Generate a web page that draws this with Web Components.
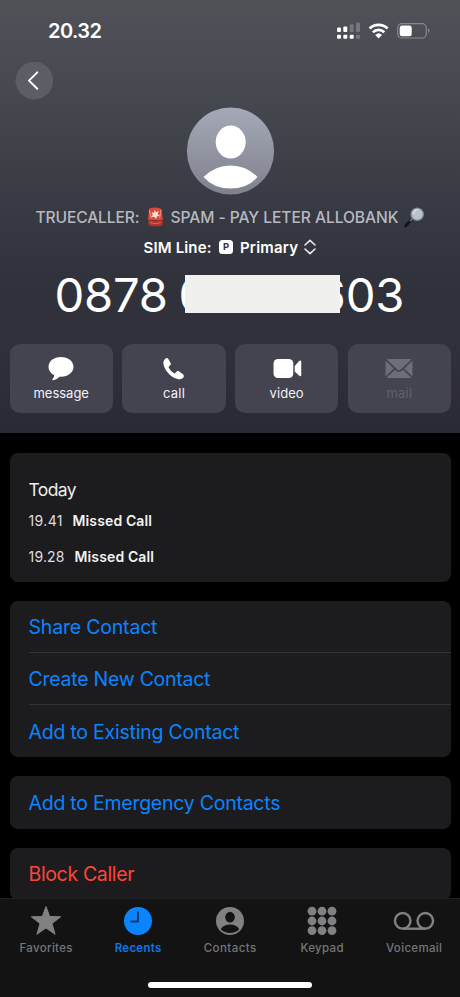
<!DOCTYPE html>
<html lang="en">
<head>
<meta charset="utf-8">
<title>Contact</title>
<style>
html,body{margin:0;background:#000;height:997px;overflow:hidden;font-family:Inter,"Liberation Sans",sans-serif;color:#fff}
</style>
</head>
<body>
<phone-screen></phone-screen>
<script>
const define=(name,html,setup)=>customElements.define(name,class extends HTMLElement{
  connectedCallback(){
    if(this.shadowRoot)return;
    const t=document.createElement('template');
    t.innerHTML=typeof html==='function'?html(this):html;
    this.attachShadow({mode:'open'}).append(t.content.cloneNode(true));
    if(setup)setup(this);
  }
});

/* Text set to a given width by adjusting its tracking. */
define('fit-text',e=>`<style>
:host{display:block;flex:none;white-space:pre;width:${e.getAttribute('w')}px;font-size:${e.getAttribute('size')}px;font-weight:${e.getAttribute('weight')||400};line-height:1.2}
span{display:inline-block}
</style><span></span>`,e=>{
  const s=e.shadowRoot.querySelector('span');
  s.textContent=e.getAttribute('text');
  const n=s.textContent.length-1;
  if(n>0)s.style.letterSpacing=((+e.getAttribute('w')-s.getBoundingClientRect().width)/n)+'px';
});

define('status-bar',`<style>
:host{display:flex;height:61.5px;box-sizing:border-box;padding:19px 30px 0 48px;justify-content:space-between;align-items:flex-start}
svg{display:block;margin-top:2px}
</style>
<fit-text text="20.32" size="20" weight="600" w="54"></fit-text>
<svg width="94" height="20" viewBox="336 21 94 20">
<g fill="#fff"><rect x="337" y="27.6" width="4" height="4.4" rx="1"/><rect x="343.3" y="26.5" width="4" height="5.5" rx="1"/><rect x="337" y="34.7" width="4" height="4" rx="1"/><rect x="343.3" y="34.7" width="4" height="4" rx="1"/><rect x="349.7" y="34.7" width="4" height="4" rx="1"/></g>
<g fill="#76767c"><rect x="349.7" y="24.2" width="4" height="7.8" rx="1"/><rect x="356" y="22.5" width="4" height="9.5" rx="1"/><rect x="356" y="34.7" width="4" height="4" rx="1"/></g>
<g fill="none" stroke="#fff" stroke-width="2.7"><path d="M369.6 28.4a13.2 13.2 0 0 1 18 0"/><path d="M372.9 32.2a8.3 8.3 0 0 1 11.4 0"/></g>
<path d="M375.2 34.9a5 5 0 0 1 6.8 0l-3.4 3.5z" fill="#fff"/>
<rect x="397.7" y="23.6" width="28.6" height="14.4" rx="4.2" fill="none" stroke="#88888e" stroke-width="1.2"/>
<rect x="399.7" y="25.5" width="12" height="10.7" rx="2.5" fill="#fff"/><path d="M428 28.6q1.5.6 1.5 2.2t-1.5 2.2z" fill="#88888e"/>
</svg>`);

define('back-button',`<style>
:host{display:block;height:38px;margin-left:15px}svg{display:block}
</style><svg width="39" height="38"><circle cx="19.3" cy="18.6" r="18.8" fill="#5d5d65"/><path d="M22.3 10.4L14 18.6l8.3 8.2" fill="none" stroke="#fff" stroke-width="2" stroke-linecap="round" stroke-linejoin="round"/></svg>`);

define('contact-avatar',`<style>:host{display:block;width:89px;height:88px}svg{display:block}</style>
<svg width="89" height="88"><defs><linearGradient id="g" x2="0" y2="1"><stop stop-color="#a5a8b7"/><stop offset="1" stop-color="#7f828c"/></linearGradient></defs>
<g transform="translate(.5 .4)"><circle cx="44" cy="43.6" r="43.6" fill="url(#g)"/><ellipse cx="44.2" cy="34.7" rx="15" ry="16.5" fill="#fff"/><path d="M17 69.7Q28 58 44 58T71 69.7Q61 81.2 44 81.2T17 69.7z" fill="#fff"/></g></svg>`);

define('caller-label',`<style>
:host{display:flex;height:24px;align-items:center;color:#b7b8c0;padding-left:35.5px}
.a{margin:0 7px 0 7px}.b{margin-left:5px}svg{flex:none}
fit-text{margin-top:2px}
</style>
<fit-text text="TRUECALLER:" size="15.6" weight="500" w="104"></fit-text>
<svg class="a" width="17" height="20" viewBox="0 0 17 20"><path d="M2 2Q3 .5 8 .5t6.5 1.8L16 13H1z" fill="#d9473d"/><path d="M1.5 12q7 3 14 0l.2 5.3q-.3 2-7.2 2t-7-2z" fill="#b72f2b"/><path d="M2.3 3l2 8M14 3l-1.4 8" stroke="#f58a7b" stroke-width="1.1"/><path d="M7.7 2.8l1.2 2.5 3-1.3-1.2 2.9 2.2 2-3 .4-.7 2.7-2-2.2-3 .5 1.6-2.5-1.4-2.2 2.7.1z" fill="#ffe1d4"/><path d="M3 15.5q5.5 2.4 10.7 0" stroke="#dd6c61" fill="none"/></svg>
<fit-text text="SPAM - PAY LETER ALLOBANK" size="15.6" weight="500" w="228"></fit-text>
<svg class="b" width="22" height="22" viewBox="0 0 22 22"><path d="M1.7 19.7l5.5-6" stroke="#15161b" stroke-width="3" stroke-linecap="round"/><path d="M6 15l3-3" stroke="#777b83" stroke-width="1.7"/><circle cx="13.2" cy="8.2" r="6.2" fill="#b9c2cb" stroke="#7b828b" stroke-width="1.2"/><path d="M9.5 8q.4-4 4.2-4.3" stroke="#dce3e9" fill="none" stroke-width="1.2"/></svg>`);

define('sim-line',`<style>
:host{display:flex;height:24px;align-items:center;padding-left:143.5px}
b{display:block;flex:none;width:14px;height:13.5px;border-radius:3.5px;background:#fff;color:#34353e;font-size:9.5px;line-height:13.5px;text-align:center;font-weight:700;margin:0 7px 0 7.5px}
svg{margin-left:6px}
fit-text{margin-top:2px}
</style>
<fit-text text="SIM Line:" size="15" weight="600" w="68"></fit-text><b>P</b>
<fit-text text="Primary" size="15" weight="600" w="58"></fit-text>
<svg width="12" height="16"><path d="M1 6L6 1.3 11 6M1 10l5 4.7 5-4.7" fill="none" stroke="#e8e8ec" stroke-width="1.6" stroke-linecap="round" stroke-linejoin="round"/></svg>`);

define('phone-number',`<style>
:host{display:flex;position:relative;height:57px;padding-left:54.5px;align-items:flex-start}
fit-text{margin-top:.7px}
.n0{margin-left:10.5px}
.n1{margin-left:107px}
i{position:absolute;left:185px;top:8.8px;width:155px;height:38.4px;background:#f0f0ee}
</style>
<fit-text text="0878" size="47.2" weight="370" w="113.5"></fit-text>
<fit-text class="n0" text="0" size="47.2" weight="370" w="31"></fit-text>
<fit-text class="n1" text="603" size="47.2" weight="370" w="88"></fit-text>
<i></i>`);

const icons={
message:'<path d="M15 1C7.4 1 2 5.5 2 11.3c0 4 2.4 7 6 8.8-.2 1.8-1 3-2 4.2-.4.5 0 1 .7.9 2.7-.4 5-1.7 6.7-3.6l1.6.1c7.6 0 13-4.6 13-10.4S22.6 1 15 1z"/>',
call:'<path d="M5.9 2.8C4 4.2 3.5 6.7 4.3 9.6c2 6.7 8 12.9 14.4 14.2 3 .7 5.3-.1 6.2-1.8.8-1.4.3-2.5-.9-3.4l-3.6-2.5c-1.3-.8-2.3-.5-3.2.6l-.8 1c-.4.5-.9.5-1.5.1-2.3-1.4-4.2-3.4-5.3-5.7-.3-.6-.2-1 .3-1.4l.8-.7c1.1-.8 1.3-1.8.6-3.1L9.3 3.4c-.9-1.5-2-1.7-3.4-.6z"/>',
video:'<rect x="1" y="3" width="20.5" height="20" rx="4.5"/><path d="M23 10.5l4.5-5q2.3-1.7 2.3.7v13.5q0 2.4-2.3.7L23 16z"/>',
mail:'<path d="M2 3.5Q3 3 4 3h22q1 0 2 .5L16.5 14.2q-1.5 1.3-3 0zM1 5l8.5 8L1 21.3zM29 5l-8.5 8 8.5 8.3zM2.2 22.7l8.5-8.5 1.5 1.3q2.8 2.2 5.6 0l1.5-1.3 8.5 8.5q-.7.3-1.8.3H4q-1 0-1.8-.3z"/>'};
define('action-button',e=>`<style>
:host{display:flex;flex:1;height:69px;border-radius:10px;background:#43444f;flex-direction:column;align-items:center;box-sizing:border-box;padding-top:12px;color:#f2f2f6;--i:#fff}
:host([disabled]){color:#60616b;--i:#6d6e78}
svg{display:block;fill:var(--i);margin-bottom:4.5px}
</style><svg width="30" height="25" viewBox="0 0 30 26">${icons[e.getAttribute('icon')]}</svg>
<fit-text text="${e.getAttribute('label')}" size="13" w="${e.getAttribute('w')}"></fit-text>`);

define('contact-hero',`<style>
:host{display:block;height:432.5px;background:linear-gradient(#515158 0,#464850 95px,#373a42 210px,#30323b 290px,#30303b 350px,#2a2936 432px)}
contact-avatar{margin:7.5px 0 0 186px}
caller-label{margin-top:10px}sim-line{margin-top:6px}phone-number{margin-top:7px}
nav{display:flex;gap:9.3px;padding:0 9px 0 9.5px;margin-top:21px}
</style>
<status-bar></status-bar><back-button></back-button><contact-avatar></contact-avatar>
<caller-label></caller-label><sim-line></sim-line><phone-number></phone-number>
<nav><action-button icon="message" label="message" w="55.5"></action-button><action-button icon="call" label="call" w="22"></action-button><action-button icon="video" label="video" w="34"></action-button><action-button icon="mail" label="mail" w="25.5" disabled></action-button></nav>`);

define('list-card',`<style>:host{display:block;background:#1c1c1e;border-radius:8px;margin:0 9px 19px 9.5px;overflow:hidden}</style><slot></slot>`);
define('card-row',e=>`<style>
:host{display:flex;height:52.3px;align-items:center;margin-left:19px;padding-top:3px;color:#0a84ff;box-sizing:border-box;border-bottom:1px solid #343437}
:host([last]){border:0;padding-top:2px}:host([danger]){color:#ff453a}
</style><fit-text text="${e.getAttribute('label')}" size="19.5" w="${e.getAttribute('w')}"></fit-text>`);
define('call-entry',e=>`<style>:host{display:flex;height:36px;align-items:center;gap:10px;color:#f2f2f4}.t{color:#dedee2}</style>
<fit-text class="t" text="${e.getAttribute('time')}" size="14" w="${e.getAttribute('tw')}"></fit-text>
<fit-text text="Missed Call" size="14" weight="600" w="79.5"></fit-text>`);
define('call-log',`<style>:host{display:block;height:128.5px;box-sizing:border-box;padding:26px 0 0 19px;color:#ececef}call-entry:first-of-type{margin-top:3px}</style>
<fit-text text="Today" size="17.5" w="48"></fit-text>
<call-entry time="19.41" tw="34"></call-entry><call-entry time="19.28" tw="36"></call-entry>`);

const tabs={
star:'<path d="M16 1.5l3.7 10 11 .3-8.7 6.7 3.1 10.8L16 23l-9.1 6.3L10 18.5 1.3 11.8l11-.3z" stroke="currentColor" stroke-linejoin="round"/>',
clock:'<circle cx="16" cy="16" r="14"/><path d="M16 7v9.5H9" fill="none" stroke="#123a68" stroke-width="2" stroke-linecap="round" stroke-linejoin="round"/>',
person:'<circle cx="16" cy="16" r="14"/><ellipse cx="16" cy="12.2" rx="4.8" ry="5.4" fill="#131314"/><path d="M6.8 24.2Q9.5 19.6 16 19.6t9.2 4.6Q21.5 28 16 28t-9.2-3.8z" fill="#131314"/>',
keypad:[6.2,16,25.6].map(y=>[6,16,26].map(x=>`<circle cx="${x}" cy="${y}" r="4.4"/>`).join('')).join(''),
voice:'<g fill="none" stroke="currentColor" stroke-width="2.4"><circle cx="4.7" cy="15.8" r="7.8"/><circle cx="27.3" cy="15.8" r="7.8"/><path d="M4.7 23.7h22.6"/></g>'};
define('tab-item',e=>`<style>
:host{display:flex;flex:1;flex-direction:column;align-items:center;color:#818184}
:host([active]){color:#0a84ff}
svg{display:block;fill:currentColor;overflow:visible;margin-bottom:5px}
fit-text{opacity:.9}
</style><svg width="32" height="32" viewBox="0 0 32 32">${tabs[e.getAttribute('icon')]}</svg>
<fit-text text="${e.getAttribute('label')}" size="11.5" weight="${e.getAttribute('weight')||500}" w="${e.getAttribute('w')}"></fit-text>`);
define('tab-bar',`<style>
:host{display:flex;flex-direction:column;align-items:center;height:99px;background:#131314;box-sizing:border-box;border-top:1px solid #202022;padding-top:5.7px}
nav{display:flex;width:100%}
i{display:block;width:164px;height:6px;border-radius:3px;background:#fff;margin-top:26.3px}
</style><nav><tab-item icon="star" label="Favorites" w="53"></tab-item><tab-item icon="clock" label="Recents" w="46.5" weight="600" active></tab-item><tab-item icon="person" label="Contacts" w="52.5"></tab-item><tab-item icon="keypad" label="Keypad" w="43"></tab-item><tab-item icon="voice" label="Voicemail" w="56"></tab-item></nav><i></i>`);

define('phone-screen',`<style>
:host{display:flex;flex-direction:column;width:460px;height:997px;background:#000;overflow:hidden}
main{flex:1;min-height:0;overflow:hidden}
contact-hero{margin-bottom:20.5px}
</style>
<main><contact-hero></contact-hero>
<list-card><call-log></call-log></list-card>
<list-card><card-row label="Share Contact" w="129"></card-row><card-row label="Create New Contact" w="182"></card-row><card-row label="Add to Existing Contact" w="211" last></card-row></list-card>
<list-card><card-row label="Add to Emergency Contacts" w="252" last></card-row></list-card>
<list-card><card-row label="Block Caller" w="106" danger last></card-row></list-card>
</main><tab-bar></tab-bar>`);
</script>
</body>
</html>
